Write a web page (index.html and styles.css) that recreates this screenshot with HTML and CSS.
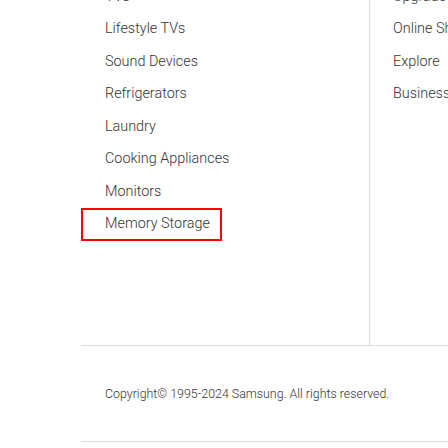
FILE: index.html
```html
<!DOCTYPE html>
<html>
<head>
<meta charset="utf-8">
<link rel="stylesheet" href="styles.css">
</head>
<body>
<footer class="footer">
  <div class="cols">
    <ul class="col col-products">
      <li><a class="link" href="#">TVs</a></li>
      <li><a class="link" href="#">Lifestyle TVs</a></li>
      <li><a class="link" href="#">Sound Devices</a></li>
      <li><a class="link" href="#">Refrigerators</a></li>
      <li><a class="link" href="#">Laundry</a></li>
      <li><a class="link" href="#">Cooking Appliances</a></li>
      <li><a class="link" href="#">Monitors</a></li>
      <li><a class="link focused" href="#">Memory Storage</a></li>
    </ul>
    <div class="col col-spacer"></div>
    <ul class="col col-shop">
      <li><a class="link" href="#">Upgrade Program</a></li>
      <li><a class="link" href="#">Online Shop</a></li>
      <li><a class="link" href="#">Explore</a></li>
      <li><a class="link" href="#">Business</a></li>
    </ul>
  </div>
  <div class="copyright">
    <p>Copyright© 1995-2024 Samsung. All rights reserved.</p>
  </div>
</footer>
</body>
</html>
```

FILE: styles.css
```css
html, body {
  margin: 0;
  padding: 0;
  background: #fff;
}
body {
  font-family: Roboto, "Liberation Sans", Arial, sans-serif;
  color: #333;
  overflow: hidden;
}
.footer {
  margin-left: 81px;
  margin-top: -19.5px;
}
.cols {
  display: flex;
  border-bottom: 1px solid #dcdcdc;
  height: 364px;
}
.col {
  list-style: none;
  margin: 0;
  padding: 0;
}
.col-products {
  width: 141px;
  flex: none;
}
.col-spacer {
  width: 147px;
  flex: none;
}
.col-shop {
  flex: 1;
  border-left: 1px solid #dcdcdc;
  overflow: hidden;
  white-space: nowrap;
}
.link {
  display: block;
  height: 32.5px;
  line-height: 32.5px;
  padding-left: 24px;
  font-size: 14.4px;
  font-weight: 300;
  color: #333;
  text-decoration: none;
  white-space: nowrap;
}
.col-shop .link {
  padding-left: 23px;
}
.focused {
  outline: 2px solid #f00;
  outline-offset: -2px;
}
.copyright {
  height: 95px;
  display: flex;
  align-items: center;
  padding-left: 24px;
  border-bottom: 1px solid #dcdcdc;
}
.copyright p {
  margin: 0;
  font-size: 12.4px;
  font-weight: 300;
  color: #333;
  white-space: nowrap;
}
```
